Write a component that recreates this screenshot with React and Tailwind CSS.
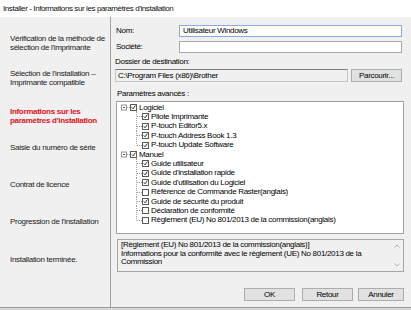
import React from 'react'

const steps = [
  { lines: ['Vérification de la méthode de', "sélection de l'imprimante"], h: 'h-[35px]' },
  { lines: ["Sélection de l'installation –", 'Imprimante compatible'], h: 'h-[37px]' },
  { lines: ['Informations sur les', "paramètres d'installation"], h: 'h-[37px]', active: true },
  { lines: ['Saisie du numéro de série'], h: 'h-[37px]' },
  { lines: ['Contrat de licence'], h: 'h-[37px]' },
  { lines: ["Progression de l'installation"], h: 'h-[38px]' },
  { lines: ['Installation terminée.'], h: 'h-[30px]' },
]

const tree = [
  { label: 'Logiciel', root: true, checked: true },
  { label: 'Pilote Imprimante', checked: true },
  { label: 'P-touch Editor5.x', checked: true },
  { label: 'P-touch Address Book 1.3', checked: true },
  { label: 'P-touch Update Software', checked: true, last: true },
  { label: 'Manuel', root: true, checked: true },
  { label: 'Guide utilisateur', checked: true },
  { label: "Guide d'installation rapide", checked: true },
  { label: "Guide d'utilisation du Logiciel", checked: true },
  { label: 'Référence de Commande Raster(anglais)', checked: false },
  { label: 'Guide de sécurité du produit', checked: true },
  { label: 'Déclaration de conformité', checked: false },
  { label: 'Règlement (EU) No 801/2013 de la commission(anglais)', checked: false, last: true },
]

const CheckBox = ({ x, checked }) => (
  <>
    <rect x={x + 0.5} y={1.5} width={6} height={6} fill="white" stroke="#5a5a5a" strokeWidth="1" />
    {checked && (
      <polyline
        points={`${x + 1.8},4.4 ${x + 3.1},5.8 ${x + 5.4},2.6`}
        fill="none"
        stroke="#2b2b2b"
        strokeWidth="1"
      />
    )}
  </>
)

const TreeRow = ({ item }) => {
  if (item.root) {
    return (
      <div className="flex h-[9.4px] items-center">
        <svg width="21" height="9.4" viewBox="0 0 21 9.4" className="shrink-0 overflow-visible">
          <rect x="4.5" y="2" width="5" height="5" fill="white" stroke="#939393" />
          <line x1="6" y1="4.5" x2="8" y2="4.5" stroke="#505050" />
          <line x1="10" y1="4.5" x2="13" y2="4.5" stroke="#a0a0a0" strokeDasharray="1 1" />
          <CheckBox x={13} checked={item.checked} />
          <line x1="19.5" y1="8" x2="19.5" y2="9.4" stroke="#a0a0a0" strokeDasharray="1 1" />
        </svg>
        <span className="ml-[1px] whitespace-nowrap">{item.label}</span>
      </div>
    )
  }
  return (
    <div className="flex h-[9.4px] items-center">
      <svg width="33" height="9.4" viewBox="0 0 33 9.4" className="shrink-0 overflow-visible">
        <line x1="19.5" y1="0" x2="19.5" y2={item.last ? 4.5 : 9.4} stroke="#a0a0a0" strokeDasharray="1 1" />
        <line x1="20" y1="4.5" x2="25" y2="4.5" stroke="#a0a0a0" strokeDasharray="1 1" />
        <CheckBox x={25} checked={item.checked} />
      </svg>
      <span className="ml-[1px] whitespace-nowrap">{item.label}</span>
    </div>
  )
}

const Button = ({ children, className = '' }) => (
  <button
    className={`h-[13px] bg-[#e1e1e1] border border-[#adadad] flex items-center justify-center text-[8px] leading-none text-black ${className}`}
  >
    {children}
  </button>
)

const App = () => {
  return (
    <div className="w-[411px] h-[310px] bg-[#f0f0f0] flex flex-col overflow-hidden font-['Liberation_Sans',Arial,sans-serif] text-[8px] tracking-[-0.3px] text-black">
      {/* title bar */}
      <div className="h-[17px] bg-white flex items-center pl-[3px] tracking-[-0.4px] text-[#111]">
        Installer - Informations sur les paramètres d'installation
      </div>

      <div className="flex flex-1 min-h-0">
        {/* steps */}
        <div className="w-[111px] border-r border-[#a3a3a3] pt-[18px] pl-[10px] leading-[8.5px] text-[#1a1a1a]">
          {steps.map((s, i) => (
            <div key={i} className={s.h}>
              {s.lines.map((l) => (
                <div key={l} className={s.active ? 'font-bold text-[#e3101e] leading-[9px]' : ''}>
                  {l}
                </div>
              ))}
            </div>
          ))}
        </div>

        {/* form */}
        <div className="flex-1 flex flex-col pl-[5px] pr-[7px]">
          <div className="mt-[8px] flex items-center h-[12px] mr-[2px]">
            <div className="w-[63px]">Nom:</div>
            <div className="flex-1 h-[12px] bg-white border border-[#86ace0] flex items-center pl-[3px]">
              Utilisateur Windows
            </div>
          </div>
          <div className="mt-[4px] flex items-center h-[12px] mr-[2px]">
            <div className="w-[63px]">Société:</div>
            <div className="flex-1 h-[12px] bg-white border border-[#a9a9a9]" />
          </div>

          <div className="mt-[4px] leading-[9px] -ml-[1px]">Dossier de destination:</div>
          <div className="mt-[3px] flex items-end -ml-[1px] mr-[2px]">
            <div className="w-[233px] h-[13px] bg-[#f0f0f0] border border-[#c6c6c6] border-t-[#7d7d7d] flex items-center pl-[2px]">
              C:\Program Files (x86)\Brother
            </div>
            <Button className="ml-[3px] h-[12px] flex-1">Parcourir...</Button>
          </div>

          <div className="mt-[7px] leading-[9px] ml-[1px]">Paramètres avancés :</div>
          <div className="mt-[3px] h-[133px] bg-white border border-[#a0a0a0] pt-[1px] overflow-hidden">
            {tree.map((t) => (
              <TreeRow key={t.label} item={t} />
            ))}
          </div>

          <div className="mt-[5px] ml-[1px] h-[33px] border border-[#a6a6a6] bg-[#f0f0f0] flex">
            <div className="flex-1 pl-[3px] pt-[1px] leading-[8.5px]">
              [Règlement (EU) No 801/2013 de la commission(anglais)]
              <br />
              Informations pour la conformité avec le règlement (UE) No 801/2013 de la
              <br />
              Commission
            </div>
            <div className="w-[13px] flex flex-col justify-between items-center py-[4px]">
              <svg width="6" height="4" viewBox="0 0 6 4">
                <polyline points="0.5,3.5 3,1 5.5,3.5" fill="none" stroke="#b0b0b0" />
              </svg>
              <svg width="6" height="4" viewBox="0 0 6 4">
                <polyline points="0.5,0.5 3,3 5.5,0.5" fill="none" stroke="#b0b0b0" />
              </svg>
            </div>
          </div>

          <div className="mt-[16px] flex justify-end">
            <Button className="w-[51px] border-[#0078d7]">OK</Button>
            <Button className="w-[51px] ml-[7px]">Retour</Button>
            <Button className="w-[46px] ml-[5px]">Annuler</Button>
          </div>
        </div>
      </div>

      <div className="h-[3px] bg-[#d6d6d6] border-t border-[#9c9c9c]" />
    </div>
  )
}

export default App
